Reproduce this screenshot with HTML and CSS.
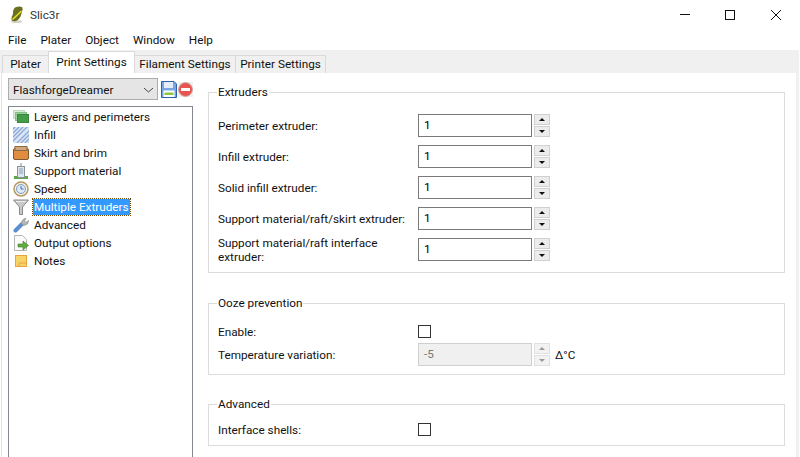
FILE: index.html
```html
<!DOCTYPE html>
<html lang="en">
<head>
  <meta charset="UTF-8" />
  <title>Slic3r</title>
  <link rel="stylesheet" href="styles.css">
</head>
<body>
  <div class="titlebar">
    <svg class="app-icon" width="14" height="18" viewBox="0 0 14 18">
      <ellipse cx="6.500" cy="15.500" rx="5.500" ry="1.500" fill="#d4d4c6"/>
      <path d="M5 1.500 Q9 0 12 1 Q13.500 3 12 6 L11 9 Q10 13 6 15 Q3 16 1.500 14 Q1 11 3 8 Q2.500 4 5 1.500Z" fill="#6b6f22"/>
      <path d="M2.500 13.500 L11.500 5" stroke="#e4df1e" stroke-width="1.600"/>
    </svg>
    <span class="title">Slic3r</span>
    <div class="window-buttons">
      <svg width="12" height="12" viewBox="0 0 12 12"><path d="M2 5.500H12" stroke="#111"/></svg>
      <svg width="12" height="12" viewBox="0 0 12 12"><rect x="1.500" y="1.500" width="9" height="9" fill="none" stroke="#111"/></svg>
      <svg width="12" height="12" viewBox="0 0 12 12"><path d="M1 1L11 11M11 1L1 11" stroke="#111"/></svg>
    </div>
  </div>

  <div class="menubar">
    <span>File</span><span>Plater</span><span>Object</span><span>Window</span><span>Help</span>
  </div>

  <div class="tabs">
    <div class="tab tab-plater">Plater</div>
    <div class="tab tab-print active">Print Settings</div>
    <div class="tab tab-filament">Filament Settings</div>
    <div class="tab tab-printer">Printer Settings</div>
  </div>

  <div class="page">
    <div class="sidebar">
      <div class="preset-row">
        <div class="combo">
          <span>FlashforgeDreamer</span>
          <svg width="11" height="6" viewBox="0 0 11 6"><path d="M1 1L5.500 5L10 1" fill="none" stroke="#444"/></svg>
        </div>
        <svg width="16" height="17" viewBox="0 0 16 17">
          <path d="M.5 .5H13L15.500 3V16.500H.5Z" fill="#78a6e2" stroke="#2f5fa8"/>
          <rect x="3" y="1" width="9" height="6" fill="#e4edf8"/>
          <rect x="2.500" y="9.500" width="11" height="6.500" fill="#fff"/>
          <rect x="3.500" y="11.500" width="9" height="2.500" fill="#8cc63f"/>
        </svg>
        <div class="delete-btn">
          <svg width="15" height="15" viewBox="0 0 15 15">
            <circle cx="7.500" cy="7.500" r="6.800" fill="#e8544e" stroke="#c98f8a"/>
            <rect x="3" y="6" width="9" height="3" fill="#fff"/>
          </svg>
        </div>
      </div>
      <ul class="tree">
        <li>
          <svg width="16" height="16" viewBox="0 0 16 16">
            <rect x=".5" y="1.500" width="11" height="8" fill="#d8ecd8" stroke="#bcdcbc"/>
            <rect x="2.500" y="3.500" width="11" height="8" fill="#9fd09f" stroke="#86bf86"/>
            <rect x="4.500" y="5.500" width="11" height="8" fill="#469c4a" stroke="#38863e"/>
          </svg>
          <span>Layers and perimeters</span>
        </li>
        <li>
          <svg width="16" height="16" viewBox="0 0 16 16">
            <rect x="0" y="0" width="16" height="16" fill="#dbe6f5"/>
            <path d="M-2 4L4 -2M-2 8L8 -2M-2 12L12 -2M-2 16L16 -2M2 18L18 2M6 18L18 6M10 18L18 10M14 18L18 14" stroke="#8aa9d8" stroke-width="1.300"/>
          </svg>
          <span>Infill</span>
        </li>
        <li>
          <svg width="16" height="16" viewBox="0 0 16 16">
            <rect x=".5" y="3.500" width="15" height="11" rx="1.500" fill="#e08d3f" stroke="#7f5a32"/>
            <rect x="2" y="1.500" width="12" height="4" fill="#d2a878" stroke="#8a6a46"/>
          </svg>
          <span>Skirt and brim</span>
        </li>
        <li>
          <svg width="16" height="16" viewBox="0 0 16 16">
            <rect x="1" y="13" width="14" height="3" fill="#5da84f"/>
            <path d="M8 0V3" stroke="#888"/>
            <rect x="4.500" y="3.500" width="7" height="11" fill="#dfe5ec" stroke="#8a929c"/>
            <path d="M6 6H10M6 8H10M6 10H10" stroke="#8a9fb8"/>
          </svg>
          <span>Support material</span>
        </li>
        <li>
          <svg width="16" height="16" viewBox="0 0 16 16">
            <circle cx="8" cy="8" r="7" fill="#f2efe4" stroke="#b59a62" stroke-width="1.500"/>
            <circle cx="8" cy="8" r="4.500" fill="#dde9f7" stroke="#7f9cc4"/>
            <path d="M8 5V8H10.500" fill="none" stroke="#3f6ea8"/>
          </svg>
          <span>Speed</span>
        </li>
        <li>
          <svg width="16" height="16" viewBox="0 0 16 16">
            <path d="M.5 1H15.500L9.500 8V15.500H6.500V8Z" fill="#c9c9c9" stroke="#8a8a8a"/>
            <path d="M3 2.500H13" stroke="#eee"/>
          </svg>
          <span class="selected">Multiple Extruders</span>
        </li>
        <li>
          <svg width="16" height="16" viewBox="0 0 16 16">
            <path d="M2.500 13.500L9 7" stroke="#5b8fd0" stroke-width="4" stroke-linecap="round"/>
            <path d="M8 7L9.500 3L13 1L11.500 4L13 5.500L15.500 3.500L14.500 7L11 8.500Z" fill="#b5b5b5" stroke="#808080" stroke-width=".6"/>
          </svg>
          <span>Advanced</span>
        </li>
        <li>
          <svg width="16" height="16" viewBox="0 0 16 16">
            <path d="M1.500 .5H9.500L13.500 4.500V15.500H1.500Z" fill="#fafafa" stroke="#b5b5b5"/>
            <path d="M5 9H10V6L15.500 10.500L10 15V12H5Z" fill="#5fae3c" stroke="#3f7f2a" stroke-width=".6"/>
          </svg>
          <span>Output options</span>
        </li>
        <li>
          <svg width="16" height="16" viewBox="0 0 16 16">
            <rect x="2.500" y="2.500" width="11" height="11" fill="#f8d468" stroke="#e8a33c"/>
            <path d="M6 13V10H13" fill="none" stroke="#e8a33c"/>
          </svg>
          <span>Notes</span>
        </li>
      </ul>
    </div>

    <div class="settings">
      <fieldset class="group group-extruders">
        <legend>Extruders</legend>
        <div class="field">
          <label>Perimeter extruder:</label>
          <div class="input">1</div>
          <div class="spin"><b class="up"></b><b class="down"></b></div>
        </div>
        <div class="field">
          <label>Infill extruder:</label>
          <div class="input">1</div>
          <div class="spin"><b class="up"></b><b class="down"></b></div>
        </div>
        <div class="field">
          <label>Solid infill extruder:</label>
          <div class="input">1</div>
          <div class="spin"><b class="up"></b><b class="down"></b></div>
        </div>
        <div class="field">
          <label>Support material/raft/skirt extruder:</label>
          <div class="input">1</div>
          <div class="spin"><b class="up"></b><b class="down"></b></div>
        </div>
        <div class="field">
          <label>Support material/raft interface extruder:</label>
          <div class="input">1</div>
          <div class="spin"><b class="up"></b><b class="down"></b></div>
        </div>
      </fieldset>

      <fieldset class="group group-ooze">
        <legend>Ooze prevention</legend>
        <div class="field short">
          <label>Enable:</label>
          <div class="check"></div>
        </div>
        <div class="field">
          <label>Temperature variation:</label>
          <div class="input disabled">-5</div>
          <div class="spin disabled"><b class="up"></b><b class="down"></b></div>
          <span class="unit">Δ°C</span>
        </div>
      </fieldset>

      <fieldset class="group group-advanced">
        <legend>Advanced</legend>
        <div class="field short">
          <label>Interface shells:</label>
          <div class="check"></div>
        </div>
      </fieldset>
    </div>
  </div>
</body>
</html>
```

FILE: styles.css
```css
html, body {
  margin: 0;
  height: 457px;
  overflow: hidden;
}
body {
  font-family: Roboto, "Open Sans", sans-serif;
  font-size: 11.75px;
  color: #111;
  background: #fff;
}
.titlebar {
  height: 30px;
  display: flex;
  align-items: center;
  padding-left: 10px;
}
.title {
  margin-left: 6px;
  color: #333;
}
.window-buttons {
  margin-left: auto;
  display: flex;
  gap: 34px;
  margin-right: 18px;
}
.menubar {
  height: 20px;
  display: flex;
  align-items: center;
  gap: 14px;
  padding-left: 8px;
}
.tabs {
  height: 23px;
  background: #f0f0f0;
  display: flex;
  align-items: flex-end;
  padding-left: 2px;
  margin-right: 1px;
}
.tab {
  height: 18px;
  line-height: 16px;
  text-align: center;
  box-sizing: border-box;
  background: #f0f0f0;
  border: 1px solid #d9d9d9;
  border-bottom: 0;
  margin-left: -1px;
  position: relative;
}
.tab-plater {
  width: 47px;
  margin-left: 0;
}
.tab-print {
  width: 87px;
}
.tab-filament {
  width: 102px;
}
.tab-printer {
  width: 91px;
}
.tab.active {
  height: 22px;
  line-height: 20px;
  background: #fff;
  z-index: 1;
}
.page {
  display: flex;
  height: 384px;
  background: #fff;
  border-left: 1px solid #e3e3e3;
  border-right: 3px solid #f0f0f0;
  margin-left: 1px;
  margin-right: 1px;
  box-sizing: border-box;
}
.sidebar {
  width: 192px;
  flex: none;
  padding: 5px 0 0 6px;
  box-sizing: border-box;
}
.preset-row {
  display: flex;
  align-items: center;
  height: 22px;
  gap: 1px;
}
.combo {
  width: 150px;
  height: 22px;
  box-sizing: border-box;
  background: #e5e5e5;
  border: 1px solid #adadad;
  display: flex;
  align-items: center;
  justify-content: space-between;
  padding: 1px 3px 0 4px;
  margin-right: 2px;
}
.delete-btn {
  display: flex;
  background: #f0f0f0;
}
.tree {
  list-style: none;
  margin: 6px 0 0;
  padding: 1px 0 0 4px;
  width: 185px;
  height: 352px;
  box-sizing: border-box;
  border: 1px solid #828790;
}
.tree li {
  height: 18px;
  display: flex;
  align-items: center;
  gap: 4px;
}
.tree li span {
  padding: 0 1px;
  line-height: 16px;
}
.tree .selected {
  background: #3399ff;
  color: #fff;
  outline: 1px dotted #7a4a00;
}
.settings {
  flex: 1;
  padding: 12px 11px 0 14px;
  min-width: 0;
}
.group {
  margin: 0;
  padding: 0 0 0 9px;
  border: 1px solid #dcdcdc;
  min-width: 0;
  box-sizing: border-box;
}
.group legend {
  padding: 0 1px;
  margin-left: -1px;
  line-height: 14px;
}
.group-extruders {
  height: 188px;
  padding-top: 11px;
}
.group-ooze {
  height: 79px;
  margin-top: 23px;
  padding-top: 14px;
}
.group-advanced {
  height: 49px;
  margin-top: 22px;
  padding-top: 11px;
}
.field {
  display: flex;
  align-items: center;
  height: 31px;
}
.field.short {
  height: 15px;
}
.field label {
  width: 200px;
  flex: none;
  line-height: 14px;
}
.input {
  width: 114px;
  height: 23px;
  box-sizing: border-box;
  border: 1px solid #7a7a7a;
  line-height: 21px;
  padding-left: 5px;
  color: #000;
  background: #fff;
}
.input.disabled {
  background: #f0f0f0;
  border-color: #cfcfcf;
  color: #777;
}
.spin {
  margin-left: 2px;
  width: 16px;
  height: 23px;
  display: flex;
  flex-direction: column;
  justify-content: space-between;
}
.spin b {
  height: 11px;
  box-sizing: border-box;
  background: #ececec;
  border: 1px solid #d0d0d0;
  display: flex;
  align-items: center;
  justify-content: center;
}
.spin b::after {
  content: "";
  border-left: 3px solid transparent;
  border-right: 3px solid transparent;
}
.spin .up::after {
  border-bottom: 3px solid #111;
}
.spin .down::after {
  border-top: 3px solid #111;
}
.spin.disabled b {
  border-color: #e0e0e0;
  background: #f2f2f2;
}
.spin.disabled .up::after {
  border-bottom-color: #999;
}
.spin.disabled .down::after {
  border-top-color: #999;
}
.unit {
  margin-left: 5px;
}
.check {
  width: 13px;
  height: 13px;
  box-sizing: border-box;
  border: 1px solid #333;
  background: #fff;
}
```
